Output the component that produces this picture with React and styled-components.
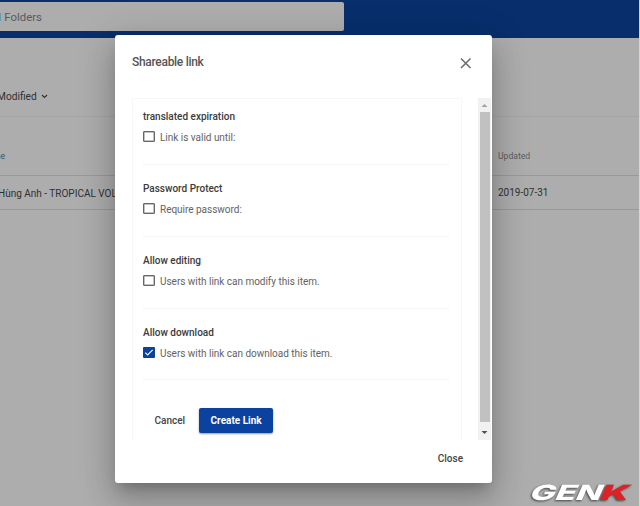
import React from "react";
import styled, { createGlobalStyle } from "styled-components";

const Global = createGlobalStyle`
  * { box-sizing: border-box; }
  body { margin: 0; overflow: hidden; background: #adadad; font-family: Roboto, "Liberation Sans", sans-serif; }
  button { font-family: inherit; border: 0; background: none; padding: 0; }
`;

const Page = styled.div`
  position: relative;
  width: 640px;
  height: 506px;
  overflow: hidden;
  background: #adadad;
  border-right: 1px solid #d5d5d5;
  white-space: nowrap;
`;
const Header = styled.header`
  height: 38px;
  padding-top: 2px;
  background: #082f6c;
`;
const Search = styled.div`
  display: flex;
  align-items: center;
  gap: 3px;
  width: 344px;
  height: 29px;
  border-radius: 0 2px 2px 0;
  background: #adadad;
  color: #5a5a5a;
  font-size: 11.4px;
`;
const Selected = styled.span`
  margin-left: -1.5px;
  color: #4c86ad;
`;
const SortBar = styled.div`
  display: flex;
  align-items: center;
  gap: 4px;
  height: 79px;
  padding-top: 38px;
  margin-left: -3px;
  border-bottom: 1px solid #a5a5a5;
  color: #303030;
  font-size: 10.2px;
`;
const TableRow = styled.div`
  display: grid;
  grid-template-columns: 498px 1fr;
  align-items: center;
  height: ${(p) => (p.$head ? 59 : 34)}px;
  padding-top: ${(p) => (p.$head ? 19 : 0)}px;
  border-bottom: 1px solid #999;
  color: ${(p) => (p.$head ? "#5c5c5c" : "#303030")};
  font-size: ${(p) => (p.$head ? 8.6 : 10)}px;
`;
const Cell = styled.span`
  margin-left: ${(p) => p.$shift || 0}px;
  padding-top: ${(p) => p.$drop || 0}px;
  color: ${(p) => p.$color || "inherit"};
`;
const Dialog = styled.section`
  position: absolute;
  left: 115px;
  top: 35px;
  width: 377px;
  height: 448px;
  border-radius: 3px;
  background: #fff;
  box-shadow: 0 9px 12px -5px rgba(0,0,0,.2), 0 18px 30px 2px rgba(0,0,0,.14), 0 7px 36px 6px rgba(0,0,0,.12);
`;
const DialogHeader = styled.header`
  display: flex;
  justify-content: space-between;
  height: 63px;
  padding: 20px 20px 0 17px;
`;
const Title = styled.h1`
  margin: 0;
  color: #555;
  font-size: 12px;
  line-height: 14px;
  font-weight: 500;
  letter-spacing: -0.3px;
`;
const CloseIcon = styled.svg`
  display: block;
  margin-top: 2px;
  width: 12px;
  height: 12px;
`;
const Scroller = styled.div`
  display: flex;
  justify-content: space-between;
  height: 342px;
  padding-left: 17px;
  overflow: hidden;
`;
const Panel = styled.form`
  width: 330px;
  height: 360px;
  padding: 1px 12px 0 10px;
  border: 1px solid #f7f7f7;
`;
const Group = styled.div`
  height: ${(p) => p.$h || 72}px;
  padding-top: ${(p) => p.$pad || 17}px;
  border-bottom: 1px solid #f5f5f5;
`;
const GroupTitle = styled.div`
  color: #3b3b3b;
  font-size: 10px;
  font-weight: 500;
  line-height: 14px;
`;
const Option = styled.label`
  display: flex;
  align-items: center;
  gap: 5px;
  margin-top: 7px;
  height: 13px;
  color: #636363;
  font-size: 10px;
  letter-spacing: -0.02px;
`;
const Box = styled.span`
  display: grid;
  place-items: center;
  width: 12px;
  height: 11px;
  margin-bottom: 2px;
  border: ${(p) => (p.$on ? "0" : "1px solid #666")};
  box-shadow: ${(p) => (p.$on ? "none" : "inset 0 0 0 0.5px #8a8a8a")};
  border-radius: 1px;
  background: ${(p) => (p.$on ? "#0b42a0" : "#fff")};
`;
const Actions = styled.div`
  display: flex;
  align-items: center;
  gap: 14px;
  padding: 28px 0 0 11.5px;
`;
const TextButton = styled.button`
  color: #444;
  font-size: 10px;
  font-weight: 500;
`;
const Primary = styled.button`
  width: 74px;
  height: 25px;
  padding-bottom: 1px;
  border-radius: 2px;
  background: #0b42a0;
  color: #fff;
  font-size: 10px;
  font-weight: 700;
  box-shadow: 0 1px 2px rgba(0,0,0,.4);
`;
const Scrollbar = styled.div`
  display: flex;
  flex-direction: column;
  align-items: center;
  justify-content: space-between;
  width: 13px;
  margin-right: 1px;
  background: #f1f1f1;
`;
const Thumb = styled.div`
  width: 10px;
  height: 310px;
  background: #c1c1c1;
`;
const Arrow = styled.svg`
  display: block;
  width: 13px;
  height: ${(p) => p.$h}px;
`;
const Footer = styled.footer`
  display: flex;
  justify-content: flex-end;
  padding: 13px 29px 0 0;
`;
const Logo = styled.svg`
  position: absolute;
  left: 524px;
  top: 478px;
  width: 114px;
  height: 28px;
  font-family: Inter, sans-serif;
  font-weight: 800;
  filter: drop-shadow(-1px 1px 1px rgba(0,0,0,.6));
`;

const groups = [
  { title: "translated expiration", text: "Link is valid until:", h: 65, pad: 10 },
  { title: "Password Protect", text: "Require password:" },
  { title: "Allow editing", text: "Users with link can modify this item." },
  { title: "Allow download", text: "Users with link can download this item.", on: true, h: 71 },
];

export default function App() {
  return (
    <Page>
      <Global />
      <Header><Search><Selected>l</Selected>Folders</Search></Header>
      <SortBar>
        Modified
        <svg width="7" height="5" viewBox="0 0 7 5"><path d="M1 1l2.5 2.5L6 1" fill="none" stroke="#303030" strokeWidth="1.1" /></svg>
      </SortBar>
      <TableRow $head><Cell $shift={-7} $color="#38536b">me</Cell><Cell>Updated</Cell></TableRow>
      <TableRow><Cell $shift={-2} $drop={2}>Hùng Anh - TROPICAL VOL</Cell><Cell>2019-07-31</Cell></TableRow>
      <Dialog>
        <DialogHeader>
          <Title>Shareable link</Title>
          <CloseIcon viewBox="0 0 12 12"><path d="M1 1.5l9.5 9.5m0-9.5L1 11" stroke="#6b6b6b" strokeWidth="1.5" /></CloseIcon>
        </DialogHeader>
        <Scroller>
          <Panel>
            {groups.map((g) => (
              <Group key={g.title} $h={g.h} $pad={g.pad}>
                <GroupTitle>{g.title}</GroupTitle>
                <Option>
                  <Box $on={g.on}>
                    {g.on && <svg width="12" height="11" viewBox="0 0 12 12"><path d="M2 6.2l2.5 2.5L10 3.2" fill="none" stroke="#fff" strokeWidth="1.2" /></svg>}
                  </Box>
                  {g.text}
                </Option>
              </Group>
            ))}
            <Actions><TextButton type="button">Cancel</TextButton><Primary type="button">Create Link</Primary></Actions>
          </Panel>
          <Scrollbar>
            <Arrow $h={13} viewBox="0 0 13 13"><path d="M3.5 9l3-3 3 3z" fill="#a0a0a0" /></Arrow>
            <Thumb />
            <Arrow $h={18} viewBox="0 0 13 18"><path d="M3.5 9h6l-3 3z" fill="#505050" /></Arrow>
          </Scrollbar>
        </Scroller>
        <Footer><TextButton type="button">Close</TextButton></Footer>
      </Dialog>
      <Logo viewBox="0 0 114 28">
        <g transform="translate(4 21.5) skewX(-24)" fontSize="21">
          <text textLength="72" lengthAdjust="spacingAndGlyphs" fill="#fff">GEN</text>
          <text x="70" textLength="29" lengthAdjust="spacingAndGlyphs" fill="#df2027" fontWeight="900">K</text>
        </g>
      </Logo>
    </Page>
  );
}
